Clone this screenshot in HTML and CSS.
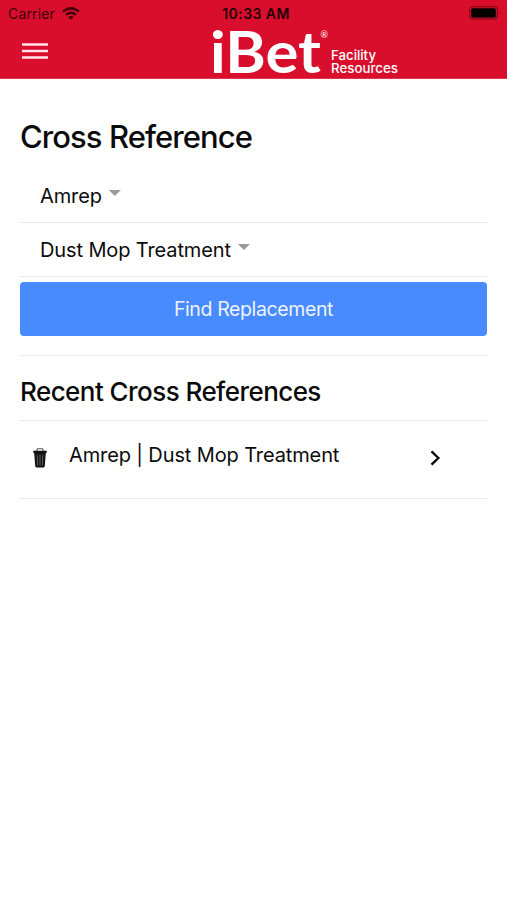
FILE: index.html
```html
<!DOCTYPE html>
<html lang="en">
<head>
<meta charset="utf-8">
<title>Cross Reference</title>
<link rel="stylesheet" href="styles.css">
</head>
<body>
<header class="header">
  <div class="status">
    <div class="carrier"><span>Carrier</span>
      <svg class="wifi" width="18" height="13" viewBox="0 0 18 13"><g fill="none" stroke="currentColor" stroke-width="2.3"><path d="M1 4.7Q9-2.3 17 4.7"/><path d="M4 7.9Q9 3.7 14 7.9"/></g><path d="M6.3 9.9Q9 7.9 11.7 9.9L9 12.6Z" fill="currentColor"/></svg>
    </div>
    <span class="time">10:33 AM</span>
    <svg class="battery" width="32" height="14" viewBox="0 0 32 14"><rect x=".7" y=".7" width="27.6" height="12.2" rx="3" fill="none" stroke="#86091a" stroke-width="1.2"/><rect x="2.2" y="2.2" width="24.6" height="9.2" rx="1.5"/><path d="M29.7 4.7Q31.4 6.8 29.7 8.9Z" fill="#86091a"/></svg>
  </div>
  <div class="toolbar">
    <svg class="menu" width="26" height="17" viewBox="0 0 26 17"><path d="M0 1.6H26M0 8.1H26M0 14.6H26" stroke="#ffe1e8" stroke-width="2.5"/></svg>
    <svg class="logo" width="190" height="50" viewBox="0 0 190 50">
      <g fill="#fff">
        <text class="brand" x="0" y="45" textLength="111" lengthAdjust="spacingAndGlyphs">iBet</text>
        <text class="reg" x="110.5" y="9.5">®</text>
        <text class="tag" x="121" y="31.5" textLength="45" lengthAdjust="spacingAndGlyphs">Facility</text>
        <text class="tag" x="121" y="45" textLength="67" lengthAdjust="spacingAndGlyphs">Resources</text>
      </g>
    </svg>
  </div>
</header>
<main class="content">
  <h1 class="title">Cross Reference</h1>
  <div class="select first"><span>Amrep</span><i class="caret"></i></div>
  <div class="select"><span class="product">Dust Mop Treatment</span><i class="caret"></i></div>
  <button class="find">Find Replacement</button>
  <h2 class="subtitle">Recent Cross References</h2>
  <div class="recent">
    <svg class="trash" width="14" height="20" viewBox="0 0 14 20"><path d="M4 3V1.6Q4 .8 5 .8H9Q10 .8 10 1.6V3" fill="none" stroke="#555" stroke-width="1.1"/><path d="M.3 2.8H13.7V5H.3ZM1.2 5H12.8L11.8 18Q11.7 19.4 10.3 19.4H3.7Q2.3 19.4 2.2 18Z" fill="#111"/><path d="M4.2 6.5L4.7 17.5M7 6.5V17.5M9.8 6.5L9.3 17.5" stroke="#777" stroke-width=".8"/></svg>
    <span class="name">Amrep | Dust Mop Treatment</span>
    <svg class="chevron" width="11" height="16" viewBox="0 0 11 16"><path d="M1.5 1.3L8.4 8L1.5 14.7" fill="none" stroke="#000" stroke-width="2.3"/></svg>
  </div>
</main>
</body>
</html>
```

FILE: styles.css
```css
* { box-sizing: border-box; }
body { margin: 0; background: #fff; color: #0b0b0b; font-family: Inter, "Liberation Sans", sans-serif; }
.header { height: 79px; background: #d90e2c; border-bottom: 1px solid #dc3650; color: #3b0009; }
.status { display: grid; grid-template-columns: 1fr auto 1fr; align-items: center; height: 28px; padding: 0 6px 2px 8px; }
.carrier { display: flex; align-items: center; gap: 7px; font-size: 14px; letter-spacing: .15px; }
.time { padding-left: 3px; font-size: 14px; line-height: 14px; font-weight: 600; letter-spacing: .45px; margin-top: 2px; color: #240006; }
.battery { justify-self: end; }
.toolbar { display: flex; align-items: flex-start; height: 50px; padding-left: 22px; }
.menu { margin-top: 15px; }
.logo { margin-left: 162px; overflow: visible; }
.brand { font: 700 58px Lato, sans-serif; }
.reg { font: 9px Lato, sans-serif; }
.tag { font: 500 13.5px Inter, sans-serif; }
.content { padding: 35px 20px 0 20px; }
.title { margin: 0; height: 55px; font-size: 31px; line-height: 46px; font-weight: 500; letter-spacing: -.93px; }
.select { display: flex; align-items: center; height: 54px; padding: 0 0 0 20px; border-bottom: 1px solid #e8e8e8; font-size: 20px; letter-spacing: -.12px; }
.caret { width: 12px; height: 6px; margin: -5px 0 0 7px; background: #999; clip-path: polygon(0 0, 100% 0, 50% 100%); }
.find { display: block; width: 100%; height: 54px; margin: 5px 0 19px; padding: 0; border: 0; border-radius: 4px; background: #488aff; color: #eef4ff; font: 19.5px Inter, sans-serif; letter-spacing: -.38px; }
.subtitle { margin: 0; height: 66px; border-top: 1px solid #ebebeb; border-bottom: 1px solid #e8e8e8; font-size: 26px; line-height: 71px; font-weight: 500; letter-spacing: -.56px; }
.recent { display: flex; align-items: center; height: 78px; padding: 0 46px 4px 13px; border-bottom: 1px solid #e8e8e8; font-size: 20px; letter-spacing: -.12px; }
.trash { margin-right: 22px; }
.name { margin-top: -5px; }
.chevron { margin-left: auto; }
```
